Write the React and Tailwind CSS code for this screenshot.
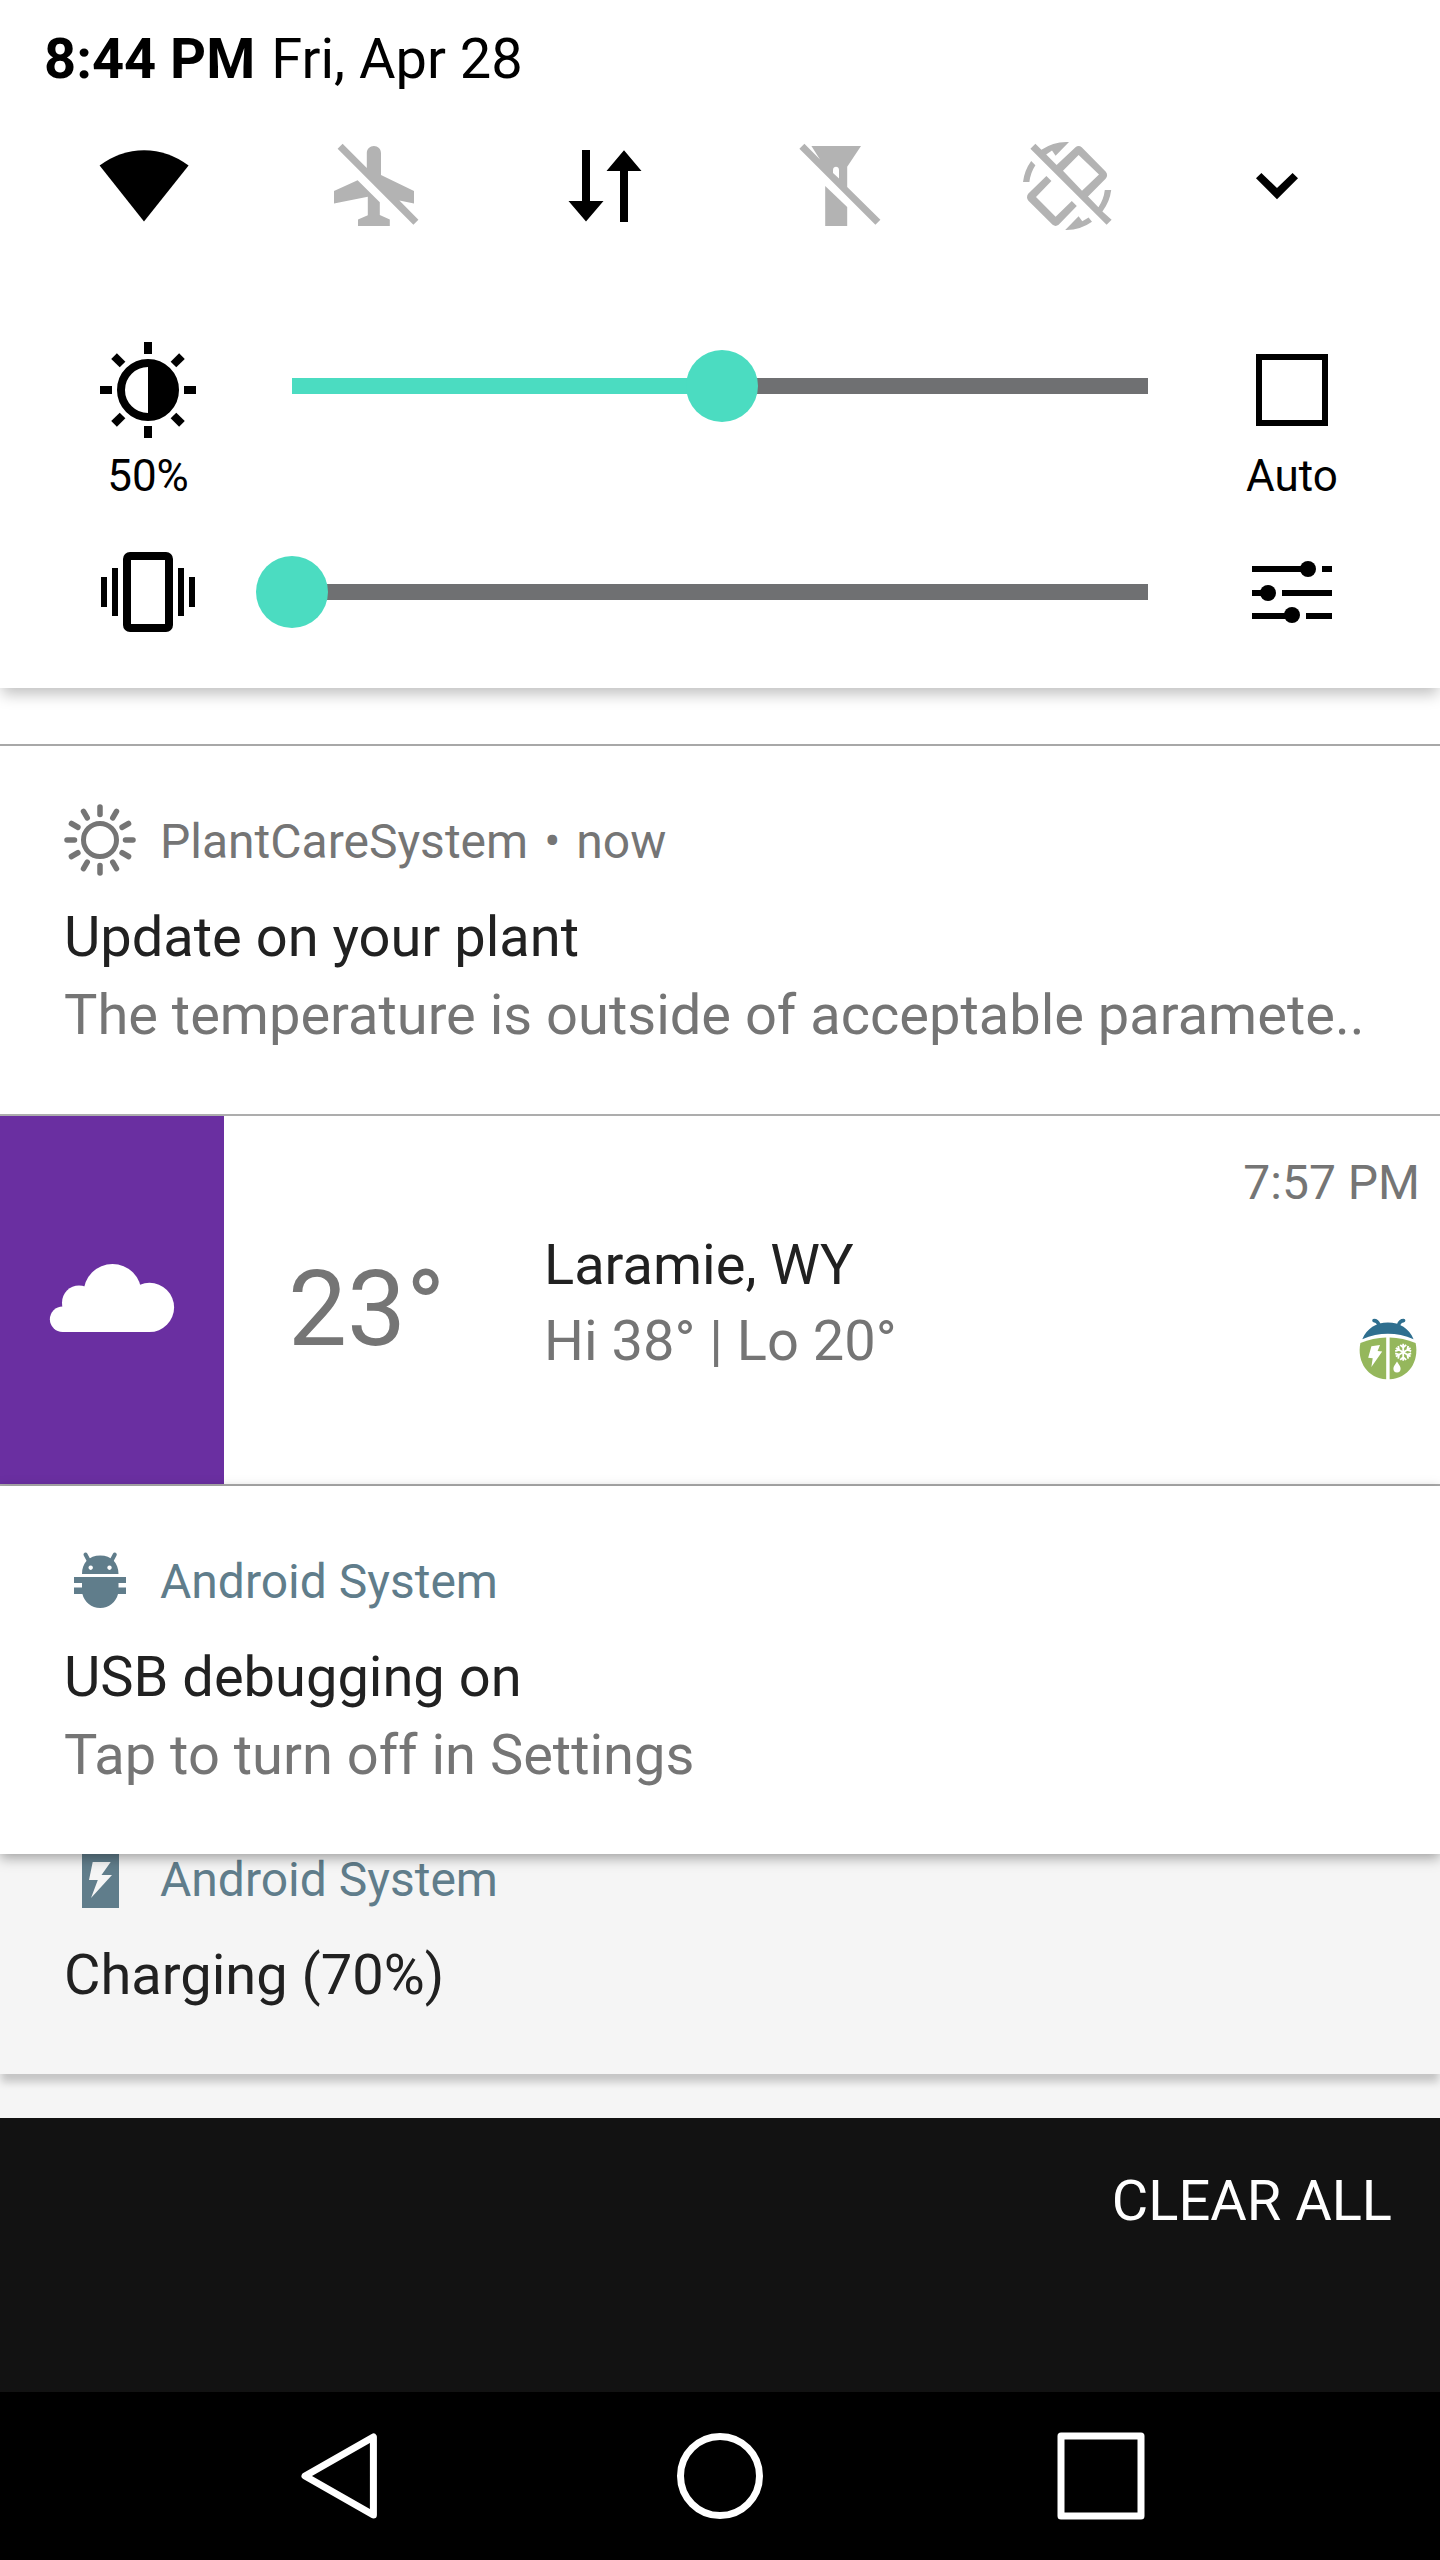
import React, { useState } from "react";

const GREY = "#b3b3b3";
const SLATE = "#607d8b";

function WifiIcon() {
  return (
    <svg viewBox="96 138 96 96" className="size-24" aria-hidden="true">
      <path d="M99.6 165.6A72 72 0 0 1 188.6 165.6L144 221.6Z" fill="#000" />
    </svg>
  );
}

function AirplaneOffIcon() {
  return (
    <svg viewBox="327 138 96 96" className="size-24" fill={GREY} aria-hidden="true">
      <path d="M337.6 148.8L342.6 143.8L366.8 168V153.2C366.8 149 370 146 373.9 146C377.8 146 381 149 381 153.2V175L414 191V203.4L399.4 200.6L418.4 219.8L413.4 224.8Z" />
      <path d="M357.6 180.2L379.8 202.2V215L389.8 219.6V226H358V219.6L367.8 215.2V196.8L334 203.4V191Z" />
    </svg>
  );
}

function DataIcon() {
  return (
    <svg viewBox="558 138 96 96" className="size-24" aria-hidden="true">
      <path d="M582 150H590V201H603.5L586 221.6L568.5 201H582Z" />
      <path d="M624 150.2L641.5 171H628V222H620V171H606.5Z" />
    </svg>
  );
}

function FlashlightOffIcon() {
  return (
    <svg viewBox="788 138 96 96" className="size-24" fill={GREY} aria-hidden="true">
      <path
        fillRule="evenodd"
        d="M799.4 148.8L804.4 143.8L820 159.4L811.4 146H861L847.2 166.8V187L880.4 219.8L875.4 224.8ZM833 173V170C833 165.600 839 165.600 839 170V178.600Z"
      />
      <path d="M825.2 186L847.2 207V226H825.2Z" />
    </svg>
  );
}

function RotationOffIcon() {
  return (
    <svg viewBox="1019 138 96 96" className="size-24" fill={GREY} aria-hidden="true">
      <path
        fillRule="evenodd"
        d="M1030.400 148.800L1035.400 143.800L1041.400 149.800A44 44 0 0 1 1069 142L1055.600 155.800L1052 150.600L1046.200 154.400L1056.600 165L1075.500 147.200Q1078.600 144.600 1081.700 147.200L1105.600 171.500Q1108.600 175.200 1105.600 178.800L1088 196.600L1098.400 207.200A38 38 0 0 0 1104.800 190H1111.200A44 44 0 0 1 1102.400 211.400L1111.600 219.800L1106.600 224.800ZM1063 170.800L1082 190.800L1099 174.400L1078.600 155Z"
      />
      <path d="M1046.400 176L1051.400 181L1036 197L1055.600 216.800L1071.800 201L1076.800 206L1058.600 224.800Q1055.600 227 1052.600 224.800L1028.400 200.800Q1025.600 197 1028.400 193.400Z" />
      <path d="M1031.200 161L1035.400 165.200A38 38 0 0 0 1029.400 182H1023A44 44 0 0 1 1031.200 161Z" />
      <path d="M1065.200 230L1078.600 216.200L1082.300 221.200L1088.600 217.600L1092 221.800A44 44 0 0 1 1065.200 230Z" />
    </svg>
  );
}

function ChevronIcon() {
  return (
    <svg viewBox="1250 138 54 96" className="h-24 w-[54px]" aria-hidden="true">
      <path d="M1256 178.200L1261.400 173L1277 188L1292.600 173L1298 178.200L1277 199.200Z" />
    </svg>
  );
}

function BrightnessIcon() {
  const angles = [0, 45, 90, 135, 180, 225, 270, 315];
  return (
    <svg viewBox="-48 -48 96 96" className="size-24" aria-hidden="true">
      <circle r="27" fill="none" stroke="#000" strokeWidth="8" />
      <path d="M0 -24A24 24 0 0 1 0 24Z" />
      {angles.map((a) => (
        <rect key={a} x="-4" y="-48" width="8" height="12" transform={`rotate(${a})`} />
      ))}
    </svg>
  );
}

function VibrateIcon() {
  return (
    <svg viewBox="100 544 96 96" className="size-24" aria-hidden="true">
      <rect x="127" y="556" width="42" height="72" rx="3" fill="none" stroke="#000" strokeWidth="8" />
      <path d="M101 577h6v30h-6zM112 568h6v48h-6zM178 568h6v48h-6zM189 577h6v30h-6z" />
    </svg>
  );
}

function TuneIcon() {
  return (
    <svg viewBox="1244 544 96 96" className="size-24" aria-hidden="true">
      <path d="M1252 566h56v6h-56zM1322 566h10v6h-10zM1252 590h16v6h-16zM1282 590h50v6h-50zM1252 613h40v6h-40zM1306 613h26v6h-26z" />
      <circle cx="1308" cy="569" r="8" />
      <circle cx="1268" cy="593" r="8" />
      <circle cx="1292" cy="615" r="8" />
    </svg>
  );
}

function SunIcon() {
  const angles = [0, 30, 60, 90, 120, 150, 180, 210, 240, 270, 300, 330];
  return (
    <svg viewBox="-36 -35 72 72" className="size-[72px]" fill="none" stroke="#757575" overflow="visible" aria-hidden="true">
      <circle r="16.500" strokeWidth="5" />
      {angles.map((a) => (
        <path key={a} d="M0 -25.500V-33" strokeWidth="5.500" strokeLinecap="round" transform={`rotate(${a})`} />
      ))}
    </svg>
  );
}

function DebugIcon() {
  return (
    <svg viewBox="64 1545 72 72" className="size-[72px]" fill={SLATE} aria-hidden="true">
      <path
        fillRule="evenodd"
        d="M82 1574C82 1563 89 1555.600 100.200 1555.600S118.500 1563 118.500 1574ZM90.700 1565.500a2.200 2.200 0 1 0 .01 0ZM109.500 1565.500a2.200 2.200 0 1 0 .01 0Z"
      />
      <path d="M85.500 1554.500L89.500 1562M114.800 1554.500L110.800 1562" stroke={SLATE} strokeWidth="4" strokeLinecap="round" />
      <path d="M74 1577H126V1583H118.500V1587.400H126V1594H118C116 1602 109 1608 100.200 1608S84.400 1602 82.400 1594H74V1587.400H82V1583H74Z" />
    </svg>
  );
}

function ChargingIcon() {
  return (
    <svg viewBox="64 1843 72 72" className="size-[72px]" aria-hidden="true">
      <path d="M82 1848H119V1908H82Z" fill={SLATE} />
      <path d="M92.700 1862H110.700L101.500 1875H112L91 1898L97.800 1880H89Z" fill="#f5f5f5" />
    </svg>
  );
}

function CloudIcon() {
  return (
    <svg viewBox="48 1262 128 76" className="h-[76px] w-32" fill="#fff" aria-hidden="true">
      <circle cx="112.500" cy="1293" r="29" />
      <circle cx="149.500" cy="1307.400" r="24.600" />
      <circle cx="79" cy="1302.500" r="17" />
      <circle cx="62.600" cy="1319.300" r="12.700" />
      <path d="M62.600 1302H149.500V1332H62.600Z" />
    </svg>
  );
}

function WeatherBugIcon() {
  return (
    <svg viewBox="1356 1318 64 64" className="size-16" aria-hidden="true">
      <path d="M1362.300 1339.200C1367 1328.500 1376 1322.600 1387.900 1322.600S1409 1328.500 1413.600 1339.200Q1387.900 1328.500 1362.300 1339.200Z" fill="#2f6f8f" />
      <path d="M1374 1320.600Q1377.500 1320.600 1379 1325M1403.600 1320.600Q1400 1320.600 1398.500 1325" fill="none" stroke="#2f6f8f" strokeWidth="3.600" strokeLinecap="round" />
      <path d="M1360.400 1343Q1373 1338 1386.200 1337.600V1379.200C1368 1378.500 1356.500 1362 1360.400 1343Z" fill="#95b75c" />
      <path d="M1389.600 1337.600Q1403 1338 1415.600 1343C1419.500 1362 1408 1378.500 1389.600 1379.200Z" fill="#95b75c" />
      <path d="M1371.400 1346.200L1380 1345L1377.600 1351L1382.200 1351.400L1371.400 1367L1372.700 1358.300L1368.200 1357.700Z" fill="#fff" />
      <path d="M1397 1361.600C1399 1365 1400.600 1366.500 1400.600 1368.800A3.600 3.600 0 0 1 1393.400 1368.800C1393.400 1366.500 1395 1365 1397 1361.600Z" fill="#fff" />
      <g stroke="#fff" strokeWidth="1.800" fill="none" transform="translate(1403.200 1352.300)">
        {[0, 60, 120, 180, 240, 300].map((a) => (
          <path key={a} d="M0 0V-8.500M-3 -7.500L0 -4.800L3 -7.500" transform={`rotate(${a})`} />
        ))}
      </g>
    </svg>
  );
}

function BackIcon() {
  return (
    <svg viewBox="292 2428 96 96" className="size-24" fill="none" stroke="#fff" strokeWidth="7" strokeLinejoin="round" aria-hidden="true">
      <path d="M373.400 2437V2515L305 2476Z" />
    </svg>
  );
}

function HomeIcon() {
  return (
    <svg viewBox="-48 -48 96 96" className="size-24" fill="none" stroke="#fff" strokeWidth="7" aria-hidden="true">
      <circle r="39.500" />
    </svg>
  );
}

function RecentsIcon() {
  return (
    <svg viewBox="1052 2428 96 96" className="size-24" fill="none" stroke="#fff" strokeWidth="7" strokeLinejoin="round" aria-hidden="true">
      <rect x="1061" y="2436" width="80" height="80" />
    </svg>
  );
}

function Slider({ label, initial }) {
  const [value, setValue] = useState(initial);
  return (
    <div className="grid min-w-0 flex-1 items-center">
      <div className="mx-9 h-4 bg-[#6f7072] [grid-area:1/1]">
        <div className="h-4 bg-[#4bdcc1]" style={{ width: `${(value / 255) * 100}%` }} />
      </div>
      <input
        type="range"
        min="0"
        max="255"
        aria-label={label}
        value={value}
        onChange={(e) => setValue(Number(e.target.value))}
        className="z-1 h-[72px] w-full cursor-pointer appearance-none bg-transparent [grid-area:1/1] [&::-webkit-slider-thumb]:size-[72px] [&::-webkit-slider-thumb]:appearance-none [&::-webkit-slider-thumb]:rounded-full [&::-webkit-slider-thumb]:bg-[#4bdcc1]"
      />
    </div>
  );
}

function Notification({ icon, app, time, appClass, title, text, className }) {
  return (
    <article className={`px-16 pt-[58px] pb-15 ${className}`}>
      <header className={`flex items-center gap-6 text-[48px] leading-[72px] ${appClass}`}>
        {icon}
        <div className="flex gap-4 pt-0.5">
          <span>{app}</span>
          {time && (
            <>
              <span>•</span>
              <time>{time}</time>
            </>
          )}
        </div>
      </header>
      <h2 className="mt-5 text-[56px] leading-[78px] text-[#212121]">{title}</h2>
      {text && <p className="overflow-hidden text-[56px] leading-[78px] whitespace-nowrap text-[#757575]">{text}</p>}
    </article>
  );
}

const toggles = [
  { label: "Wi-Fi", icon: <WifiIcon /> },
  { label: "Airplane mode", icon: <AirplaneOffIcon /> },
  { label: "Mobile data", icon: <DataIcon /> },
  { label: "Flashlight", icon: <FlashlightOffIcon /> },
  { label: "Auto-rotate", icon: <RotationOffIcon /> },
  { label: "Expand", icon: <ChevronIcon /> },
];

export default function App() {
  return (
    <div className="flex min-h-screen flex-col bg-[#121212] font-['Roboto',sans-serif]">
      <section className="relative z-10 bg-white pt-7 pb-12 text-black shadow-[0_8px_14px_-2px_rgba(0,0,0,0.25)]">
        <p className="flex gap-4 px-11 text-[56px] leading-[62px]">
          <b className="font-bold">8:44 PM</b>
          <span>Fri, Apr 28</span>
        </p>
        <div className="mt-12 flex justify-between pr-[136px] pl-24">
          {toggles.map((t) => (
            <button key={t.label} type="button" aria-label={t.label}>
              {t.icon}
            </button>
          ))}
        </div>
        <div className="mt-27 flex items-start gap-15 px-[100px]">
          <div className="flex w-24 flex-col items-center gap-3.5">
            <BrightnessIcon />
            <span className="text-[44px] leading-[48px]">50%</span>
          </div>
          <div className="flex h-[88px] flex-1">
            <Slider label="Brightness" initial={128} />
          </div>
          <label className="flex w-24 flex-col items-center gap-3.5">
            <span className="flex size-24 items-center justify-center">
              <input type="checkbox" className="size-[72px] appearance-none border-6 border-black checked:bg-black" />
            </span>
            <span className="text-[44px] leading-[48px]">Auto</span>
          </label>
        </div>
        <div className="mt-11 flex items-center gap-15 px-[100px]">
          <VibrateIcon />
          <Slider label="Ringer volume" initial={0} />
          <button type="button" aria-label="Sound settings">
            <TuneIcon />
          </button>
        </div>
      </section>

      <main className="bg-[#f5f5f5] pb-11">
        <div className="h-14 bg-white" />
        <Notification
          className="border-t-2 border-[#a8a8a8] bg-white"
          icon={<SunIcon />}
          app="PlantCareSystem"
          time="now"
          appClass="text-[#757575]"
          title="Update on your plant"
          text="The temperature is outside of acceptable paramete.."
        />
        <article className="flex h-[372px] items-stretch border-y-2 border-[#adadad] bg-white">
          <div className="flex w-56 items-center justify-center bg-[#6a2fa1]">
            <CloudIcon />
          </div>
          <p className="flex w-80 items-center pt-5 pl-16 text-[105px] leading-[120px] text-[#757575]">23°</p>
          <div className="flex flex-1 flex-col justify-center pt-1.5 text-[56px] leading-[76px]">
            <h2 className="text-[#212121]">Laramie, WY</h2>
            <p className="text-[#757575]">Hi 38° | Lo 20°</p>
          </div>
          <div className="flex flex-col items-end gap-[106px] pt-[38px] pr-5">
            <time className="text-[48px] leading-[58px] text-[#757575]">7:57 PM</time>
            <WeatherBugIcon />
          </div>
        </article>
        <Notification
          className="relative z-2 bg-white shadow-[0_4px_12px_0_rgba(0,0,0,0.35)]"
          icon={<DebugIcon />}
          app="Android System"
          appClass="text-[#607d8b]"
          title="USB debugging on"
          text="Tap to turn off in Settings"
        />
        <Notification
          className="relative z-1 -mt-[70px] bg-[#f5f5f5] shadow-[0_9px_8px_-1px_rgba(0,0,0,0.2)]"
          icon={<ChargingIcon />}
          app="Android System"
          appClass="text-[#607d8b]"
          title="Charging (70%)"
        />
      </main>

      <div className="flex flex-1 items-start justify-end px-12 pt-12">
        <button type="button" className="text-[56px] leading-[70px] text-white">
          CLEAR ALL
        </button>
      </div>

      <nav className="grid h-42 grid-cols-3 bg-black px-[150px]">
        <button type="button" aria-label="Back" className="flex items-center justify-center">
          <BackIcon />
        </button>
        <button type="button" aria-label="Home" className="flex items-center justify-center">
          <HomeIcon />
        </button>
        <button type="button" aria-label="Recent apps" className="flex items-center justify-center">
          <RecentsIcon />
        </button>
      </nav>
    </div>
  );
}
